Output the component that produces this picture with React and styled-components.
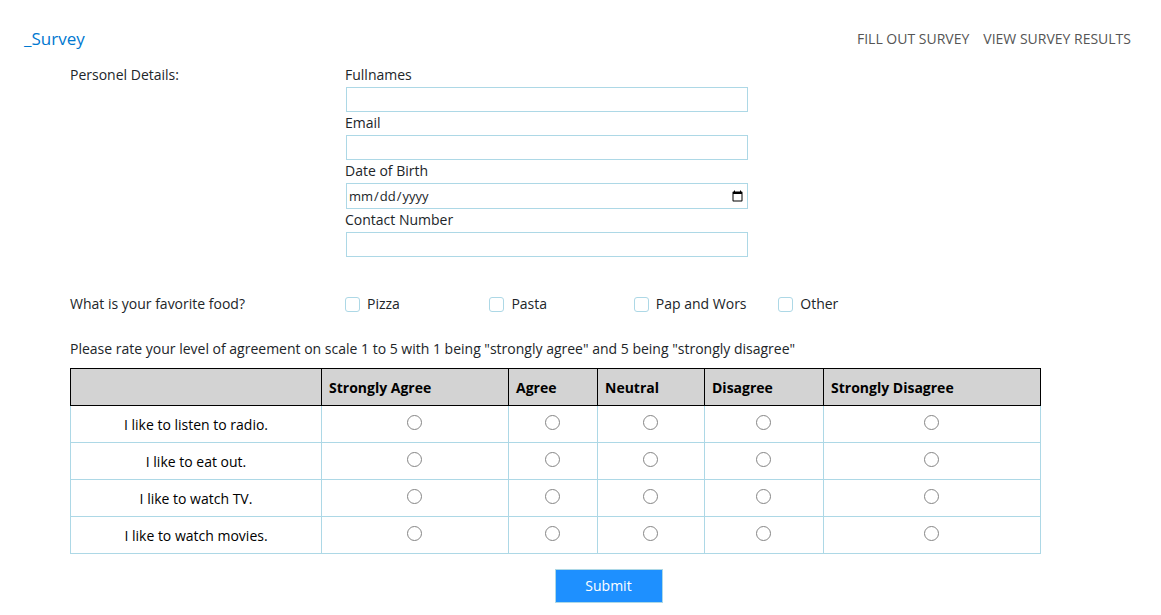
import React from "react";
import styled, { createGlobalStyle } from "styled-components";

const GlobalStyle = createGlobalStyle`
  * { box-sizing: border-box; }
  body {
    margin: 0;
    background: #fff;
    color: #212529;
    font-family: "Open Sans", "Segoe UI", sans-serif;
    font-size: 14px;
    line-height: 22px;
  }
  input, button { font: inherit; color: inherit; }
`;

const Header = styled.header`
  display: flex;
  justify-content: space-between;
  align-items: center;
  height: 64px;
  padding: 13px 30px 0 24px;
`;

const Brand = styled.a`
  color: #0078d0;
  font-size: 17px;
  line-height: 24px;
  text-decoration: none;
`;

const Nav = styled.nav`
  display: flex;
  gap: 14px;
`;

const NavLink = styled.a`
  color: #555;
  text-transform: uppercase;
  text-decoration: none;
`;

const Form = styled.form`
  padding: 0 120px 12px 70px;
`;

const Section = styled.section`
  display: grid;
  grid-template-columns: 275fr 696fr;
  margin-bottom: ${(p) => p.$gap}px;
`;

const Fields = styled.div`
  display: flex;
  flex-direction: column;
  width: 58%;
`;

const Field = styled.div`
  padding: 0 1px;
`;

const Label = styled.label`
  display: block;
  margin-left: -1px;
  padding-bottom: 1px;
`;

const TextInput = styled.input`
  display: block;
  width: 100%;
  height: ${(p) => (p.type === "date" ? 26 : 25)}px;
  padding: 0 1px;
  border: 1px solid lightblue;
  background: #fff;
  font-size: 13px;
  outline: none;
`;

const Options = styled.div`
  display: grid;
  grid-template-columns: repeat(4, 1fr);
  width: 83%;
`;

const Option = styled.label`
  display: flex;
  align-items: center;
  gap: 7px;
  white-space: nowrap;
`;

const Checkbox = styled.input`
  appearance: none;
  width: 15px;
  height: 15px;
  margin: 0;
  border: 1px solid lightblue;
  border-radius: 3px;
  background: #fff;
  &:checked { background: dodgerblue; }
`;

const Prompt = styled.p`
  margin: 0 0 8px;
`;

const Table = styled.table`
  width: 100%;
  table-layout: fixed;
  border-collapse: collapse;
  color: #000;
`;

const Column = styled.col`
  width: ${(p) => p.$width}px;
`;

const HeadCell = styled.th`
  height: 37px;
  padding: 1px 7px 0;
  border: 1px solid #000;
  background: lightgray;
  text-align: left;
`;

const Cell = styled.td`
  height: 37px;
  padding: 1px 7px 0;
  border: 1px solid lightblue;
  text-align: center;
`;

const RadioCell = styled(Cell)`
  padding: 0 1px 3px 0;
`;

const Radio = styled.input`
  display: block;
  appearance: none;
  width: 15px;
  height: 15px;
  margin: 0 auto;
  border: 1px solid #858585;
  border-radius: 50%;
  &:checked { background: dodgerblue; }
`;

const Submit = styled.button`
  display: block;
  width: 108px;
  height: 34px;
  margin: 15px 0 0 calc(50% - 1px);
  padding: 0 0 1px;
  border: 1px solid lightblue;
  background: dodgerblue;
  color: #fff;
`;

const fields = [
  { id: "fullnames", label: "Fullnames", type: "text" },
  { id: "email", label: "Email", type: "email" },
  { id: "birth", label: "Date of Birth", type: "date" },
  { id: "contact", label: "Contact Number", type: "tel" },
];
const foods = ["Pizza", "Pasta", "Pap and Wors", "Other"];
const ratings = [
  { name: "Strongly Agree", width: 187 },
  { name: "Agree", width: 89 },
  { name: "Neutral", width: 107 },
  { name: "Disagree", width: 119 },
  { name: "Strongly Disagree", width: 217 },
];
const statements = [
  "I like to listen to radio.",
  "I like to eat out.",
  "I like to watch TV.",
  "I like to watch movies.",
];

export default function App() {
  return (
    <>
      <GlobalStyle />
      <Header>
        <Brand href="#">_Survey</Brand>
        <Nav>
          <NavLink href="#survey">Fill out survey</NavLink>
          <NavLink href="#results">View survey results</NavLink>
        </Nav>
      </Header>
      <Form id="survey" onSubmit={(e) => e.preventDefault()}>
        <Section $gap={36}>
          <div>Personel Details:</div>
          <Fields>
            {fields.map((f) => (
              <Field key={f.id}>
                <Label htmlFor={f.id}>{f.label}</Label>
                <TextInput id={f.id} name={f.id} type={f.type} />
              </Field>
            ))}
          </Fields>
        </Section>
        <Section $gap={23}>
          <div>What is your favorite food?</div>
          <Options>
            {foods.map((food) => (
              <Option key={food}>
                <Checkbox type="checkbox" name="food" value={food} />
                {food}
              </Option>
            ))}
          </Options>
        </Section>
        <Prompt>
          Please rate your level of agreement on scale 1 to 5 with 1 being "strongly agree" and 5
          being "strongly disagree"
        </Prompt>
        <Table>
          <colgroup>
            <Column $width={251} />
            {ratings.map((r) => (
              <Column key={r.name} $width={r.width} />
            ))}
          </colgroup>
          <thead>
            <tr>
              <HeadCell as="td" />
              {ratings.map((r) => (
                <HeadCell key={r.name} scope="col">{r.name}</HeadCell>
              ))}
            </tr>
          </thead>
          <tbody>
            {statements.map((s, i) => (
              <tr key={s}>
                <Cell>{s}</Cell>
                {ratings.map((r) => (
                  <RadioCell key={r.name}>
                    <Radio type="radio" name={`statement-${i}`} value={r.name} aria-label={`${s} ${r.name}`} />
                  </RadioCell>
                ))}
              </tr>
            ))}
          </tbody>
        </Table>
        <Submit type="submit">Submit</Submit>
      </Form>
    </>
  );
}
